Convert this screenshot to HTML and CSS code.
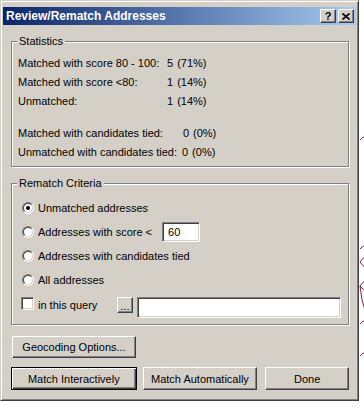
FILE: index.html
```html
<!DOCTYPE html>
<html>
<head>
    <title>Review/Rematch Addresses</title>
    <link rel="stylesheet" href="styles.css">
</head>
<body>
    <div class="window">
        <div class="titlebar">
            <span class="title">Review/Rematch Addresses</span>
            <div class="caption-buttons">
                <span class="caption-btn help">?</span>
                <span class="caption-btn close">
                    <svg width="8" height="7" viewBox="0 0 8 7">
                        <path d="M0.5 0.5 L7.5 6.5 M7.5 0.5 L0.5 6.5" stroke="#000" stroke-width="1.6" fill="none"/>
                    </svg>
                </span>
            </div>
        </div>

        <div class="content">
            <fieldset class="group">
                <legend>Statistics</legend>
                <div class="stats">
                    <div class="stat">
                        <span class="stat-label">Matched with score 80 - 100:</span>
                        <span class="stat-count">5</span><span class="stat-pct">(71%)</span>
                    </div>
                    <div class="stat">
                        <span class="stat-label">Matched with score &lt;80:</span>
                        <span class="stat-count">1</span><span class="stat-pct">(14%)</span>
                    </div>
                    <div class="stat">
                        <span class="stat-label">Unmatched:</span>
                        <span class="stat-count">1</span><span class="stat-pct">(14%)</span>
                    </div>
                    <div class="stat stat-gap">
                        <span class="stat-label">Matched with candidates tied:</span>
                        <span class="stat-count shifted">0</span><span class="stat-pct">(0%)</span>
                    </div>
                    <div class="stat">
                        <span class="stat-label">Unmatched with candidates tied:</span>
                        <span class="stat-count">0</span><span class="stat-pct">(0%)</span>
                    </div>
                </div>
            </fieldset>

            <fieldset class="group criteria">
                <legend>Rematch Criteria</legend>
                <div class="options">
                    <div class="opt">
                        <span class="radio checked"><span class="radio-in"></span></span>
                        <span>Unmatched addresses</span>
                    </div>
                    <div class="opt">
                        <span class="radio"><span class="radio-in"></span></span>
                        <span>Addresses with score &lt;</span>
                        <span class="field score">60</span>
                    </div>
                    <div class="opt">
                        <span class="radio"><span class="radio-in"></span></span>
                        <span>Addresses with candidates tied</span>
                    </div>
                    <div class="opt">
                        <span class="radio"><span class="radio-in"></span></span>
                        <span>All addresses</span>
                    </div>
                    <div class="opt query">
                        <span class="checkbox"></span>
                        <span class="query-label">in this query</span>
                        <span class="btn small">...</span>
                        <span class="field query-field"></span>
                    </div>
                </div>
            </fieldset>

            <div class="btn geo">Geocoding Options...</div>

            <div class="actions">
                <div class="btn default match-i">Match Interactively</div>
                <div class="btn match-a">Match Automatically</div>
                <div class="btn done">Done</div>
            </div>
        </div>
    </div>

    <svg class="map" width="8" height="406" viewBox="0 0 8 406">
        <g stroke="#8a1a4a" stroke-width="1" fill="none">
            <path d="M8 136 Q3 137 1 140"/>
            <path d="M8 245 Q3 246 1 249"/>
            <path d="M8 256 Q3 258 1 262 Q3 266 8 268"/>
            <path d="M8 280 Q3 282 1 286 Q4 290 8 291"/>
            <path d="M1 286 L3 300 L6 310"/>
            <path d="M8 320 Q3 321 1 324"/>
            <path d="M8 352 Q3 353 1 356"/>
        </g>
    </svg>
</body>
</html>
```

FILE: styles.css
```css
body {
    margin: 0;
    background: #fff;
    font-family: 'Liberation Sans', Arial, sans-serif;
    font-size: 11px;
    color: #000;
    position: relative;
    height: 406px;
    overflow: hidden;
}

.window {
    width: 359px;
    box-sizing: border-box;
    background: #d4d0c8;
    border: 1px solid;
    border-color: #d4d0c8 #404040 #404040 #d4d0c8;
    box-shadow: inset 1px 1px 0 #fff, inset -1px -1px 0 #808080;
    padding: 6px 2px 2px 2px;
}

.titlebar {
    height: 18px;
    display: flex;
    align-items: center;
    justify-content: space-between;
    padding: 0 2px 0 3px;
    background: linear-gradient(to right, #0a246a, #a6caf0);
}

.title {
    color: #fff;
    font-weight: bold;
    font-size: 12px;
}

.caption-buttons {
    display: flex;
    gap: 2px;
}

.caption-btn {
    width: 16px;
    height: 14px;
    box-sizing: border-box;
    display: flex;
    align-items: center;
    justify-content: center;
    background: #d4d0c8;
    border: 1px solid;
    border-color: #fff #404040 #404040 #fff;
    box-shadow: inset -1px -1px 0 #808080;
    font-weight: bold;
    font-size: 11px;
    line-height: 12px;
}

.content {
    padding: 10px 7px 8px 8px;
}

.group {
    margin: 0;
    padding: 0 5px 4px 5px;
    border: 1px solid #808080;
    box-shadow: 1px 1px 0 #fff, inset 1px 1px 0 #fff;
    min-width: 0;
}

.group legend {
    padding: 0 2px;
    line-height: 13px;
    background: #d4d0c8;
}

.stats {
    padding-top: 6px;
    padding-left: 1px;
}

.stat {
    height: 19px;
    line-height: 19px;
    display: flex;
    white-space: nowrap;
}

.stat-gap {
    margin-top: 13px;
}

.stat-label {
    flex: none;
    min-width: 144px;
    padding-right: 5px;
}

.stat-count.shifted {
    margin-left: 15px;
}

.stat-pct {
    margin-left: 4px;
}

.criteria {
    margin-top: 10px;
    padding-bottom: 6px;
}

.options {
    padding-top: 6px;
}

.opt {
    height: 24px;
    display: flex;
    align-items: center;
}

.radio {
    width: 12px;
    height: 12px;
    box-sizing: border-box;
    border-radius: 50%;
    border: 1px solid;
    border-color: #808080 #fff #fff #808080;
    margin: 0 4px 0 5px;
    display: flex;
}

.radio-in {
    flex: 1;
    border-radius: 50%;
    border: 1px solid;
    border-color: #404040 #d4d0c8 #d4d0c8 #404040;
    background: #fff;
    position: relative;
}

.radio.checked .radio-in::after {
    content: '';
    position: absolute;
    left: 2px;
    top: 2px;
    width: 4px;
    height: 4px;
    border-radius: 50%;
    background: #000;
}

.field {
    box-sizing: border-box;
    background: #fff;
    border: 1px solid;
    border-color: #808080 #fff #fff #808080;
    box-shadow: inset 1px 1px 0 #404040, inset -1px -1px 0 #d4d0c8;
}

.score {
    width: 38px;
    height: 20px;
    margin-left: 10px;
    padding-left: 5px;
    line-height: 18px;
}

.opt.query {
    height: 26px;
    align-items: flex-start;
    padding-top: 5px;
    box-sizing: border-box;
}

.checkbox {
    width: 13px;
    height: 13px;
    box-sizing: border-box;
    margin-left: 4px;
    background: #fff;
    border: 1px solid;
    border-color: #808080 #fff #fff #808080;
    box-shadow: inset 1px 1px 0 #404040, inset -1px -1px 0 #d4d0c8;
}

.query-label {
    margin-left: 4px;
    line-height: 16px;
    width: 79px;
}

.query-field {
    width: 204px;
    height: 21px;
    margin-left: 4px;
}

.btn {
    box-sizing: border-box;
    background: #d4d0c8;
    border: 1px solid;
    border-color: #fff #404040 #404040 #fff;
    box-shadow: inset -1px -1px 0 #808080;
    display: flex;
    align-items: center;
    justify-content: center;
    height: 23px;
}

.btn.small {
    width: 16px;
    height: 16px;
    align-items: flex-end;
    padding-bottom: 2px;
    line-height: 8px;
}

.btn.default {
    border-color: #000;
    box-shadow: inset 1px 1px 0 #fff, inset -1px -1px 0 #404040, inset -2px -2px 0 #808080;
}

.geo {
    width: 124px;
    height: 22px;
    margin: 11px 0 0 1px;
}

.actions {
    display: flex;
    margin-top: 9px;
}

.match-i {
    width: 126px;
}

.match-a {
    width: 115px;
    margin-left: 6px;
}

.done {
    width: 84px;
    margin-left: 8px;
}

.map {
    position: absolute;
    left: 359px;
    top: 0;
}
```
